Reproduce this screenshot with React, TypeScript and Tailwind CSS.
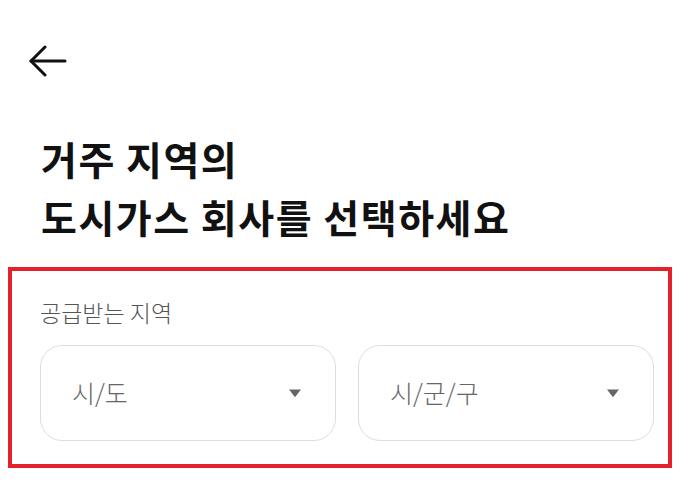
import React from 'react';

const FONT = { fontFamily: '"Noto Sans CJK KR", "Noto Sans", sans-serif' };

const SelectBox: React.FC<{ placeholder: string }> = ({ placeholder }) => (
  <button
    type="button"
    className="flex h-[96px] w-[296px] items-center justify-between rounded-[22px] border border-[#dedede] bg-white pl-[31px] pr-[33px]"
  >
    <span className="text-[25px] font-light text-[#666]">{placeholder}</span>
    {/* caret */}
    <svg width="14" height="10" viewBox="0 0 14 10">
      <path d="M1 1.5h12L7.6 8.6a0.8 0.8 0 0 1-1.2 0z" fill="#666" />
    </svg>
  </button>
);

export default function App() {
  return (
    <div className="min-h-[489px] w-[697px] bg-white" style={FONT}>
      {/* Header */}
      <div className="flex h-[129px] items-start pl-[29px] pt-[45px]">
        <svg width="38" height="32" viewBox="0 0 38 32" fill="none" stroke="#111" strokeWidth="3" strokeLinecap="round" strokeLinejoin="round">
          <path d="M2 16h34" />
          <path d="M16 2 2 16l14 14" />
        </svg>
      </div>

      {/* Title */}
      <h1 className="pl-[41px] text-[39px] font-bold leading-[58px] tracking-[1.5px] text-[#111]">
        거주 지역의
        <br />
        도시가스 회사를 선택하세요
      </h1>

      {/* Region */}
      <section className="ml-[8px] mt-[22px] w-[664px] border-4 border-[#e3222c] pb-[23px] pl-[28px] pr-[14px] pt-[26px]">
        <p className="text-[23px] font-light leading-[30px] text-[#555]">공급받는 지역</p>
        <div className="mt-[18px] flex gap-[22px]">
          <SelectBox placeholder="시/도" />
          <SelectBox placeholder="시/군/구" />
        </div>
      </section>
    </div>
  );
}
